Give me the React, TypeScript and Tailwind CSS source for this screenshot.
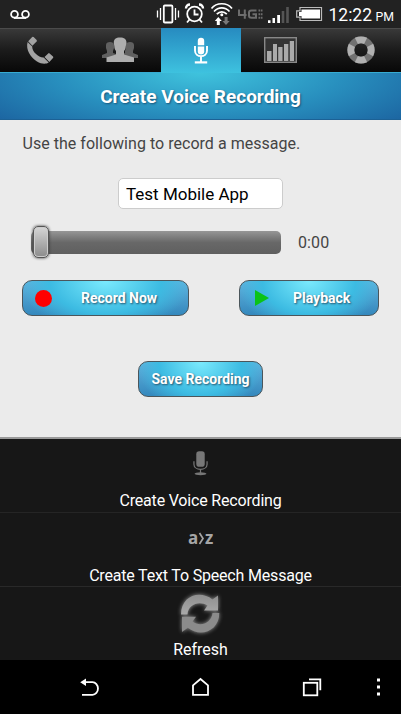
import type { ReactNode } from "react";

function MicIcon({ className }: { className: string }) {
  return (
    <svg viewBox="0 0 16 26" className={className} fill="currentColor">
      <rect x="3.500" y="0" width="9" height="16.500" rx="3" />
      <path
        d="M1 10.500v3.200c0 3.200 3 5.500 7 5.500s7-2.300 7-5.500v-3.200M8 19v4"
        fill="none"
        stroke="currentColor"
        strokeWidth="1.300"
      />
      <ellipse cx="8" cy="24" rx="6.300" ry="1.600" />
    </svg>
  );
}

function StatusBar() {
  return (
    <header className="flex h-7 bg-[#222222] text-white">
      <svg width="401" height="28" viewBox="0 0 401 28" fill="none">
        {/* Voicemail */}
        <g stroke="white" strokeWidth="1.8">
          <circle cx="14.500" cy="14.300" r="3.400" />
          <circle cx="25.500" cy="14.300" r="3.400" />
          <path d="M14 18h12" />
        </g>

        {/* Vibrate */}
        <g stroke="white">
          <rect x="163.800" y="5.500" width="8.600" height="17" rx="1" strokeWidth="1.800" />
          <path d="M160.500 8v12M157.500 10.500v7M175.500 8v12M178.500 10.500v7" strokeWidth="1.300" />
        </g>

        {/* Alarm */}
        <g stroke="white" strokeWidth="1.800">
          <circle cx="194.500" cy="14" r="7.300" />
          <path d="M194.500 9.500v5h4M189.500 19.500l-2.500 3M199.500 19.500l2.500 3" />
          <path d="M186 8.500c0-2.500 1.500-4 4-4M203 8.500c0-2.500-1.500-4-4-4" strokeWidth="2.400" />
        </g>

        {/* Wifi */}
        <g stroke="white" strokeWidth="1.700">
          <path d="M211.500 8.500c5-6.300 15.500-6.300 20.500 0M214 11.500c4.500-4.800 11-4.800 15.500 0M216.800 14.200c3-3.200 7-3.200 10 0" />
        </g>
        <circle cx="221.800" cy="14.800" r="1.500" fill="white" />
        <path d="M218.300 17l3.500 4h-2v4h-3v-4h-2z" fill="white" />
        <path d="M226 25l3.700-4h-2.100v-4h-3v4h-2.200z" fill="#777777" />

        {/* 4G LTE */}
        <g stroke="#6d6d6d" strokeWidth="2">
          <path d="M239 9.500v5.500h7.500M244.800 9.500v9.300M256.500 10.500h-5q-2.500 0-2.500 2v3.300q0 2 2.500 2h4.500v-3.600h-3.500" />
          <path d="M258.500 10.500h4M258.500 14.200h4M258.500 17.800h4" strokeWidth="1.900" strokeDasharray="1.800 .7" />
        </g>

        {/* Signal */}
        <path d="M268 20.300h2.500v2.700H268zM272.500 18h2.500v5h-2.500zM277.200 15h2.800v8h-2.800z" fill="white" />
        <path d="M281.700 11h2.600v12h-2.600zM286.200 7h2.600v16h-2.600z" fill="#555555" />

        {/* Battery */}
        <path d="M300 7.500h21.500v13H300v-3.300h-3.300v-6.400h3.300z" stroke="#bbbbbb" strokeWidth="1.200" />
        <path d="M301.500 9.500h18.500v9h-18.500v-2.500h-2.500v-4h2.500z" fill="white" />
        <text x="328.500" y="20.800" fill="white" fontFamily="Roboto, sans-serif" fontSize="18.500" textLength="43.500" lengthAdjust="spacingAndGlyphs">
          12:22
        </text>
        <text x="375.500" y="20.500" fill="white" fontFamily="Roboto, sans-serif" fontSize="12.500" textLength="18.500" lengthAdjust="spacingAndGlyphs">
          PM
        </text>
      </svg>
    </header>
  );
}

function Tab({ children, active = false }: { children: ReactNode; active?: boolean }) {
  return (
    <button
      className={
        active
          ? "flex h-[45px] w-[80px] justify-center bg-linear-to-b from-[#278bc0] to-[#3ec2df] text-white"
          : "flex h-[44px] flex-1 justify-center border-t border-[#4b4b4b] bg-linear-to-b from-[#393939] via-[#1b1b1b] to-[#080808] text-[#9d9d9d]"
      }
    >
      {children}
    </button>
  );
}

function TabBar() {
  return (
    <nav className="flex h-[45px] bg-[#37acd2]">
      <Tab>
        <svg width="80" height="43" viewBox="0 29 80 43" fill="#a3a3a3">
          <path d="M28.200 41.200l4-4.200q.7-.5 1.400.1l3 2.900q.6.700 0 1.400l-4.200 4.300z" />
          <path d="M27.600 42l4.600 4.500c-.4 5 6.500 11.300 11.500 11l5 5c-2.500 1.800-7.500 1.600-11.700-1C30.500 57.500 25.500 49.500 27.600 42z" />
          <path d="M44.500 56.900l3.700-3.500q.7-.6 1.400 0l3.400 3.200q.7.700 0 1.400l-3.700 3.900z" />
        </svg>
      </Tab>
      <Tab>
        <svg width="80" height="43" viewBox="80 29 80 43">
          <path d="M102 58v-3l5-2v-2l-1-3v-3c0-2 1.500-3 4-3s4 1 4 3v3l-1 3v2l3 1v4zm36 0v-3l-5-2v-2l1-3v-3c0-2-1.500-3-4-3s-4 1-4 3v3l-1 3v2l-3 1v4z" fill="#606060" />
          <path d="M106.500 62v-4.500l9.500-3v-3.500c-1-1-1.700-3-1.700-5l-.5-3c0-4 2-5.500 6.200-5.500s6.500 1.500 6.500 5.500l-.7 3c0 2-.8 4-1.800 5v3.500l10 3V62z" fill="#aeaeae" />
        </svg>
      </Tab>
      <Tab active>
        <svg width="50" height="45" viewBox="175.500 28 50 45" fill="none" stroke="white">
          <path d="M197.300 45.300v-4.600q0-3 3.200-3t3.200 3v4.600z" fill="white" stroke="none" />
          <path d="M197.300 46.500h6.400v5q0 3-3.200 3t-3.200-3z" fill="white" stroke="none" />
          <path d="M194.500 46v4.500c0 7.500 12 7.500 12 0V46M200.500 56v6" strokeWidth="1.900" />
          <path d="M194.300 62.400h12.400" strokeWidth="2.200" />
        </svg>
      </Tab>
      <Tab>
        <svg width="80" height="43" viewBox="241 29 80 43">
          <rect x="264.700" y="37.700" width="31.600" height="24.600" fill="#343434" stroke="#888888" strokeWidth="1.400" />
          <path d="M267 51h4.500v10H267zM273 44h4v17h-4zM278.200 47h4.300v14h-4.300zM284 44h4.300v17H284zM289.800 41h4.200v20h-4.200z" fill="#aaaaaa" />
        </svg>
      </Tab>
      <Tab>
        <svg width="80" height="43" viewBox="321 29 80 43" fill="none">
          <circle cx="361" cy="50" r="10.200" stroke="#727272" strokeWidth="6.800" />
          <circle cx="361" cy="50" r="10.200" stroke="#b0b0b0" strokeWidth="6.800" pathLength="80" strokeDasharray="12 8" strokeDashoffset="6" />
        </svg>
      </Tab>
    </nav>
  );
}

function GlossButton({ children, className }: { children: ReactNode; className: string }) {
  return (
    <button
      className={`flex h-9 items-center rounded-[10px] border border-[#4b565b] bg-[radial-gradient(ellipse_52%_150%_at_50%_0%,#7aeafd_0%,#3cbbe2_65%,transparent_100%),linear-gradient(#62b3de,#3488bd)] text-sm font-bold text-white [text-shadow:1px_1px_2px_#24516b] ${className}`}
    >
      {children}
    </button>
  );
}

function Recorder() {
  return (
    <main className="h-[319px] border-b-2 border-[#999999] bg-[#ebebeb] pt-3 text-[#444444]">
      <p className="ml-[22.500px] h-6 text-[16px] leading-[23px] tracking-[0.03px] whitespace-nowrap">
        Use the following to record a message.
      </p>
      <input
        className="mt-[22px] ml-[118px] block h-[31px] w-[165px] rounded-[5px] border border-[#cccccc] bg-white px-[7px] text-[17px] text-black outline-none"
        defaultValue="Test Mobile App"
      />
      <div className="mt-[17px] ml-[31px] flex h-8 items-center">
        <div className="flex h-[23px] w-[250px] items-center rounded-[5px] bg-linear-to-b from-[#969696] via-[#686868] to-[#5f5f5f]">
          <div className="ml-[2px] h-8 w-4 rounded-[5px] border border-[#555555] bg-linear-to-b from-[#d6d6d6] to-[#8c8c8c] shadow-[0_0_3px_#333333,inset_0_0_0_1px_#cccccc]" />
        </div>
        <span className="ml-[17px] pt-px text-[16px] tracking-[0.1px]">0:00</span>
      </div>
      <div className="mt-[22px] flex justify-between pr-[22px] pl-[22px]">
        <GlossButton className="w-[167px] pl-3">
          <span className="size-[17px] rounded-full bg-[#ff0000]" />
          <span className="ml-[29px]">Record Now</span>
        </GlossButton>
        <GlossButton className="w-[140px] pl-[15px]">
          <svg width="14" height="16" viewBox="0 0 14 16" fill="#0bc318">
            <path d="M0 0l14 8L0 16z" />
          </svg>
          <span className="ml-6">Playback</span>
        </GlossButton>
      </div>
      <GlossButton className="mx-auto mt-[45px] w-[125px] justify-center">Save Recording</GlossButton>
    </main>
  );
}

function Actions() {
  return (
    <section className="h-[221px] bg-[#171717] text-center text-[16px] leading-5 tracking-[-0.18px] text-white">
      <button className="flex h-[74px] w-full flex-col items-center border-b border-[#252525] pt-3">
        <MicIcon className="h-[25px] w-[15px] text-[#777777]" />
        <span className="mt-[15px]">Create Voice Recording</span>
      </button>
      <button className="flex h-[74px] w-full flex-col items-center border-b border-[#292929] pt-[14px]">
        <span className="flex items-center font-['Open_Sans',sans-serif] text-[17px] leading-[21px] font-bold text-[#a5a5a5]">
          a
          <svg width="7" height="14" viewBox="0 0 7 14" fill="none" stroke="currentColor" strokeWidth="1.700">
            <path d="M1.500 2l3.500 5.500-3.500 5.500" />
          </svg>
          z
        </span>
        <span className="mt-[18px]">Create Text To Speech Message</span>
      </button>
      <button className="flex w-full flex-col items-center pt-[5px]">
        <svg width="46" height="44" viewBox="177.500 592 46 44" className="drop-shadow-[0_0_2px_#999999]">
          <defs>
            <linearGradient id="refresh-top" x1="0" y1="0" x2="0" y2="1">
              <stop stopColor="#8f8f8f" />
              <stop offset="1" stopColor="#aaaaaa" />
            </linearGradient>
          </defs>
          <path
            d="M180.500 614.500C180.500 596 199 589.500 212 599.500L217.500 595.500V610.500H203.500L207 605.500C199 600.500 187.500 604 187 614.500z"
            fill="url(#refresh-top)"
          />
          <path
            d="M218.800 613C218.800 631 200 638 187.300 627.800L181.500 632V616.800H195.500L192 621.500C200 627.500 211 623 212 613z"
            fill="#8b8b8b"
          />
        </svg>
        <span className="mt-1 tracking-normal">Refresh</span>
      </button>
    </section>
  );
}

function NavigationBar() {
  return (
    <footer className="h-[54px] bg-black">
      <svg width="401" height="54" viewBox="0 660 401 54" fill="none" stroke="white" strokeWidth="1.800">
        <path d="M82 682.200h10.500a5.500 6.300 0 0 1 0 12.600H82" />
        <path d="M86 678.500v7.400l-5.800-3.700z" fill="white" stroke="none" />
        <path d="M193 694.800v-9.500l7.500-6.300 7.500 6.300v9.500z" />
        <rect x="303.800" y="682.800" width="13.500" height="12.500" />
        <path d="M309 679.300h11.300v11" />
        <path d="M377 678.500h3v3h-3zM377 685.500h3v3h-3zM377 692.500h3v3h-3z" fill="white" stroke="none" />
      </svg>
    </footer>
  );
}

export default function App() {
  return (
    <div className="h-[714px] w-[401px] overflow-hidden bg-black font-['Roboto',sans-serif]">
      <StatusBar />
      <TabBar />
      <div className="flex h-[47px] items-center justify-center border-b border-[#1c6195] bg-[radial-gradient(ellipse_65%_160%_at_50%_0%,#3fc3dd_0%,#288fbe_55%,#1c65a1_100%)] pt-[3px]">
        <h1 className="text-[19px] font-bold text-white [text-shadow:1px_1px_2px_#18557a]">Create Voice Recording</h1>
      </div>
      <Recorder />
      <Actions />
      <NavigationBar />
    </div>
  );
}
